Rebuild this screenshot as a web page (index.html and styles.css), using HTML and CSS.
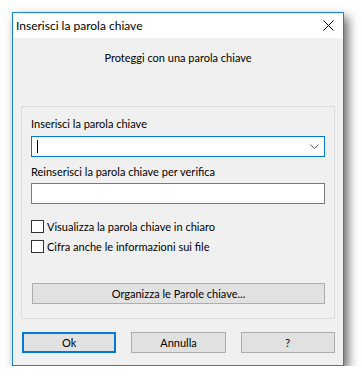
FILE: index.html
```html
<!doctype html>
<html lang="it">
<head>
    <meta charset="UTF-8">
    <title>Inserisci la parola chiave</title>
    <link rel="stylesheet" href="styles.css">
</head>
<body>
<div class="window">
    <div class="titlebar">
        <span class="title">Inserisci la parola chiave</span>
        <svg class="close" width="11" height="11" viewBox="0 0 11 11">
            <path d="M0.5 0.5 L10.5 10.5 M10.5 0.5 L0.5 10.5" stroke="#000" stroke-width="1" fill="none"/>
        </svg>
    </div>
    <div class="client">
        <div class="subtitle">Proteggi con una parola chiave</div>
        <div class="group">
            <div class="label first">Inserisci la parola chiave</div>
            <div class="combo">
                <span class="caret"></span>
                <svg class="chevron" width="9" height="5" viewBox="0 0 9 5">
                    <path d="M0.5 0.5 L4.5 4.5 L8.5 0.5" stroke="#606060" stroke-width="1" fill="none"/>
                </svg>
            </div>
            <div class="label">Reinserisci la parola chiave per verifica</div>
            <div class="textbox"></div>
            <div class="check first">
                <span class="box"></span>
                <span>Visualizza la parola chiave in chiaro</span>
            </div>
            <div class="check">
                <span class="box"></span>
                <span>Cifra anche le informazioni sui file</span>
            </div>
            <div class="btn wide">Organizza le Parole chiave...</div>
        </div>
        <div class="buttons">
            <div class="btn default">Ok</div>
            <div class="btn">Annulla</div>
            <div class="btn">?</div>
        </div>
    </div>
</div>
</body>
</html>
```

FILE: styles.css
```css
body {
    margin: 0;
    background-color: #fff;
    font-family: Lato, "Noto Sans", sans-serif;
    font-size: 11px;
    color: #000;
}

.window {
    margin: 12px 0 0 12px;
    width: 332px;
    height: 354px;
    box-sizing: border-box;
    border: 1px solid #1883d7;
    box-shadow: 4px 5px 10px rgba(0, 0, 0, 0.6);
    background-color: #f0f0f0;
}

.titlebar {
    height: 25px;
    background-color: #fff;
    display: flex;
    align-items: center;
    justify-content: space-between;
    padding: 0 9px 0 3px;
}

.title {
    font-size: 12px;
    line-height: 16px;
}

.client {
    height: 327px;
    padding: 0 8px;
}

.subtitle {
    padding-top: 12px;
    height: 16px;
    line-height: 16px;
    text-align: center;
}

.group {
    margin-top: 40px;
    border: 1px solid #dcdcdc;
    padding: 0 9px 14px;
}

.label {
    margin-top: 7px;
    height: 16px;
    line-height: 16px;
}

.label.first {
    margin-top: 9px;
}

.combo, .textbox {
    height: 21px;
    box-sizing: border-box;
    background-color: #fff;
    border: 1px solid #7a7a7a;
}

.combo {
    margin-top: 4px;
    border-color: #0078d7;
    display: flex;
    align-items: center;
    justify-content: space-between;
    padding: 0 5px 0 5px;
}

.caret {
    width: 1px;
    height: 13px;
    background-color: #000;
}

.textbox {
    margin-top: 3px;
}

.check {
    margin-top: 4px;
    height: 16px;
    display: flex;
    align-items: center;
    gap: 3px;
}

.check.first {
    margin-top: 14px;
}

.box {
    width: 13px;
    height: 13px;
    box-sizing: border-box;
    border: 1px solid #333;
    background-color: #fff;
}

.btn {
    height: 21px;
    box-sizing: border-box;
    border: 1px solid #adadad;
    background-color: #e1e1e1;
    display: flex;
    align-items: center;
    justify-content: center;
}

.btn.wide {
    margin-top: 29px;
    margin-left: 1px;
    width: 293px;
}

.buttons {
    margin-top: 13px;
    padding-left: 1px;
    display: flex;
    gap: 15px;
}

.buttons .btn {
    width: 95px;
}

.btn.default {
    border: 2px solid #0078d7;
}
```
